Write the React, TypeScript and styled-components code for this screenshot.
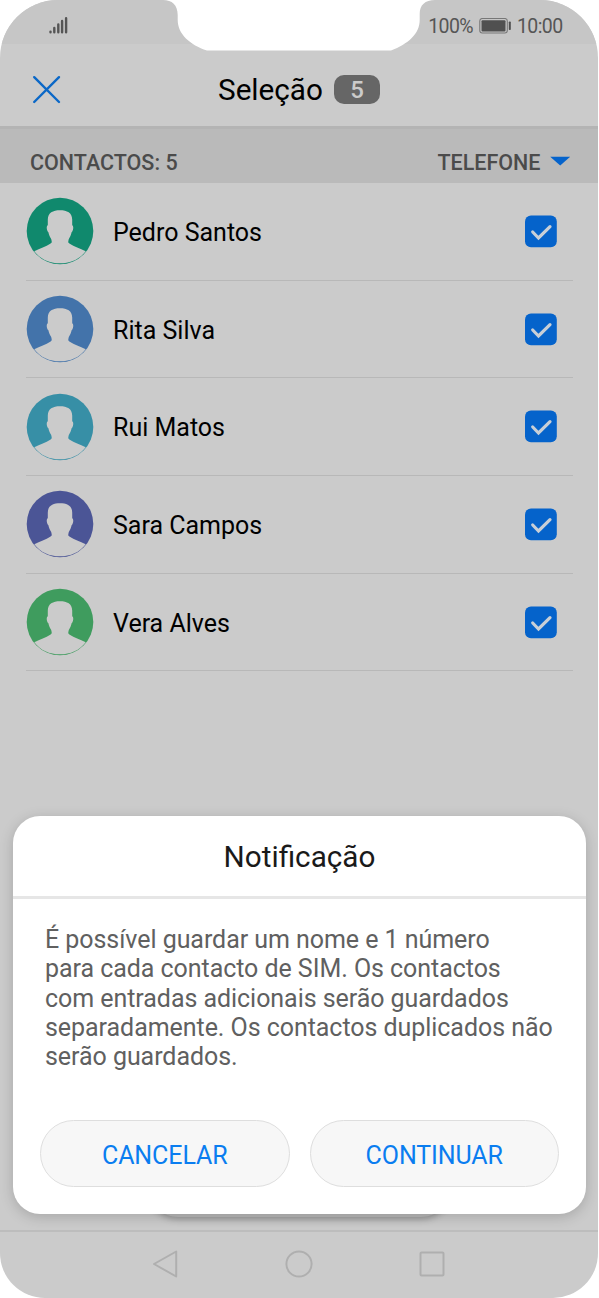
import React from 'react';
import styled, { createGlobalStyle } from 'styled-components';

const GlobalStyle = createGlobalStyle`
  * { box-sizing: border-box; }
  body { margin: 0; background: #fff; font-family: Roboto, sans-serif; overflow: hidden; }
`;

const Phone = styled.main`
  position: relative;
  display: flex;
  flex-direction: column;
  width: 597.5px;
  height: 1297.5px;
  background: #cbcbcb;
  border-radius: 58px 58px 45px 45px;
  overflow: hidden;
`;

const StatusBar = styled.div`
  display: flex;
  justify-content: space-between;
  align-items: center;
  flex: none;
  height: 44px;
  padding: 8px 35px 0 49px;
  background: #c6c6c6;
  color: #555;
  font-size: 19.5px;
  letter-spacing: -0.6px;
`;

const StatusGroup = styled.div`
  display: flex;
  align-items: center;
  gap: 6px;
`;

const Notch = styled.svg`
  position: absolute;
  top: 0;
  left: 163px;
`;

const Header = styled.header`
  display: flex;
  align-items: center;
  flex: none;
  height: 82px;
  padding: 9px 32px 0;
`;

const Title = styled.h1`
  display: flex;
  align-items: center;
  gap: 11px;
  margin: 0 0 0 157px;
  font-size: 29.7px;
  font-weight: 400;
  line-height: 34px;
  color: #000;
`;

const Count = styled.span`
  width: 46px;
  height: 29px;
  border-radius: 10px;
  background: #666;
  color: #cbcbcb;
  font-size: 24px;
  font-weight: 500;
  line-height: 30px;
  text-align: center;
`;

const SectionBar = styled.div`
  display: flex;
  justify-content: space-between;
  align-items: center;
  flex: none;
  height: 57px;
  padding: 12px 27px 0 30px;
  border-top: 3px solid #b4b4b4;
  background: #bababa;
  color: #4b4b4b;
  font-size: 21.5px;
  font-weight: 500;
`;

const Sort = styled.div`
  display: flex;
  align-items: center;
  gap: 9px;
`;

const List = styled.ul`
  flex: 1;
  margin: 0;
  padding: 0 25px 0 26px;
  list-style: none;
`;

const Row = styled.li`
  display: flex;
  align-items: center;
  height: 97.7px;
  padding: 0 16px 0 0;
  border-bottom: 1.5px solid #b8b8b8;
`;

const Name = styled.span`
  flex: 1;
  margin-left: 19px;
  padding-top: 2px;
  font-size: 25px;
  color: #000;
`;

const NavBar = styled.nav`
  display: flex;
  justify-content: center;
  align-items: center;
  gap: 105px;
  flex: none;
  height: 67.5px;
  padding: 0 0 1px 1px;
  border-top: 2px solid #bdbdbd;
`;

const Sheet = styled.div`
  position: absolute;
  left: 148px;
  top: 1150px;
  width: 303px;
  height: 66.5px;
  border-radius: 30px;
  background: #b9b9b9;
  box-shadow: 0 2px 7px rgba(0, 0, 0, 0.28);
`;

const Dialog = styled.section`
  position: absolute;
  left: 13px;
  top: 816px;
  display: flex;
  flex-direction: column;
  width: 573px;
  height: 398px;
  border-radius: 27px;
  background: #fff;
  box-shadow: 0 3px 14px rgba(0, 0, 0, 0.18);
`;

const DialogTitle = styled.h2`
  flex: none;
  height: 83px;
  margin: 0;
  border-bottom: 3px solid #e6e6e6;
  color: #1a1a1a;
  font-size: 29.7px;
  font-weight: 400;
  line-height: 81px;
  text-align: center;
`;

const Message = styled.p`
  flex: 1;
  margin: 0;
  padding: 26px 0 0 32px;
  color: #606060;
  font-size: 25px;
  letter-spacing: -0.05px;
  line-height: 29.3px;
  white-space: nowrap;
`;

const Actions = styled.div`
  display: flex;
  gap: 20px;
  padding: 0 27px 27px;
`;

const Action = styled.button`
  flex: 1;
  height: 67px;
  padding: 3px 0 0;
  border: 1.5px solid #dedede;
  border-radius: 34px;
  background: #f7f7f7;
  color: #0a7df0;
  font-family: inherit;
  font-size: 25px;
  letter-spacing: -0.1px;
`;

const contacts = [
  { name: 'Pedro Santos', color: '#10896d' },
  { name: 'Rita Silva', color: '#4373aa' },
  { name: 'Rui Matos', color: '#378fa6' },
  { name: 'Sara Campos', color: '#4b5596' },
  { name: 'Vera Alves', color: '#3f9c5e' },
];

const messageLines = [
  'É possível guardar um nome e 1 número',
  'para cada contacto de SIM. Os contactos',
  'com entradas adicionais serão guardados',
  'separadamente. Os contactos duplicados não',
  'serão guardados.',
];

const Signal = () => (
  <svg width="20" height="18" viewBox="0 0 20 18" stroke="#555" strokeWidth="2.4" strokeLinecap="round">
    <path d="M1.5 14.6v.7M5.3 11V15.3M9.3 7.5V15.3M13.1 4V15.3M17.1 1.2V15.3" />
  </svg>
);

const Battery = () => (
  <svg width="32" height="17" viewBox="0 0 32 17">
    <rect x=".8" y=".5" width="27.5" height="14.5" rx="2.5" fill="none" stroke="#777" strokeWidth="1.1" />
    <rect x="2.5" y="2.2" width="24" height="11.2" rx="1" fill="#505050" />
    <rect x="29.8" y="3.5" width="2" height="8.5" rx=".8" fill="#505050" />
  </svg>
);

const CloseIcon = () => (
  <svg width="29" height="29" viewBox="0 0 29 29" stroke="#0b68c7" strokeWidth="2.4" strokeLinecap="round">
    <path d="M2.2 2.2 27 27M27 2.2 2.2 27" />
  </svg>
);

const Avatar = ({ color }: { color: string }) => (
  <svg width="68" height="68" viewBox="0 0 68 68">
    <circle cx="34" cy="34" r="33.3" fill={color} />
    <path
      d="M34 13.3C41 13.3 46.2 15.8 46.2 22.5V28.2C48 29 47.3 34 45.6 35.2C45 38 44 40 42.8 42L42.3 44.3C42.2 45.5 42.6 46 43.8 46.7C48 49.5 54 51.5 59.7 54.2C53.7 62.3 44.5 66.3 34 66.3S14.3 62.3 8.3 54.2C14 51.5 20 49.5 24.2 46.7C25.4 46 25.8 45.5 25.7 44.3L25.2 42C24 40 23 38 22.4 35.2C20.7 34 20 29 21.8 28.2V22.5C21.8 15.8 27 13.3 34 13.3Z"
      fill="#cbcbcb"
    />
  </svg>
);

const Checkbox = () => (
  <svg width="32" height="33" viewBox="0 0 32 33">
    <rect x="0" y=".4" width="31.8" height="31.8" rx="6" fill="#0563cb" />
    <path d="M7.7 17 13.5 23 25 11.6" fill="none" stroke="#c8cfd7" strokeWidth="3.2" strokeLinecap="round" />
  </svg>
);

export default function App() {
  return (
    <>
      <GlobalStyle />
      <Phone>
        <StatusBar>
          <Signal />
          <StatusGroup>
            <span>100%</span>
            <Battery />
            <span>10:00</span>
          </StatusGroup>
        </StatusBar>
        <Header>
          <CloseIcon />
          <Title>
            Seleção <Count>5</Count>
          </Title>
        </Header>
        <SectionBar>
          <span>CONTACTOS: 5</span>
          <Sort>
            TELEFONE
            <svg width="21" height="13" viewBox="0 0 21 13">
              <path d="M.2.7h20l-10 8.8Z" fill="#0563cb" />
            </svg>
          </Sort>
        </SectionBar>
        <List>
          {contacts.map(({ name, color }) => (
            <Row key={name}>
              <Avatar color={color} />
              <Name>{name}</Name>
              <Checkbox />
            </Row>
          ))}
        </List>
        <NavBar>
          <svg width="28" height="28" viewBox="0 0 28 28" fill="none" stroke="#afafaf" strokeWidth="2" strokeLinejoin="round">
            <path d="M2 14 24.2 1.5v25Z" />
          </svg>
          <svg width="28" height="28" viewBox="0 0 28 28" fill="none" stroke="#afafaf" strokeWidth="2">
            <circle cx="14" cy="14" r="12.6" />
          </svg>
          <svg width="28" height="28" viewBox="0 0 28 28" fill="none" stroke="#afafaf" strokeWidth="2">
            <rect x="2.5" y="2.5" width="23" height="23" rx="1" />
          </svg>
        </NavBar>
        <Notch width="272" height="51" viewBox="0 0 272 51">
          <path d="M0 0C9 0 14.7 5 14.7 15V20C14.7 34 27 45 44 50.5H228C245 44 256.7 34 256.7 20V14C256.7 5 262 0 272 0Z" fill="#fff" />
        </Notch>
        <Sheet />
        <Dialog>
          <DialogTitle>Notificação</DialogTitle>
          <Message>
            {messageLines.map((line) => (
              <React.Fragment key={line}>
                {line}
                <br />
              </React.Fragment>
            ))}
          </Message>
          <Actions>
            <Action>CANCELAR</Action>
            <Action>CONTINUAR</Action>
          </Actions>
        </Dialog>
      </Phone>
    </>
  );
}
